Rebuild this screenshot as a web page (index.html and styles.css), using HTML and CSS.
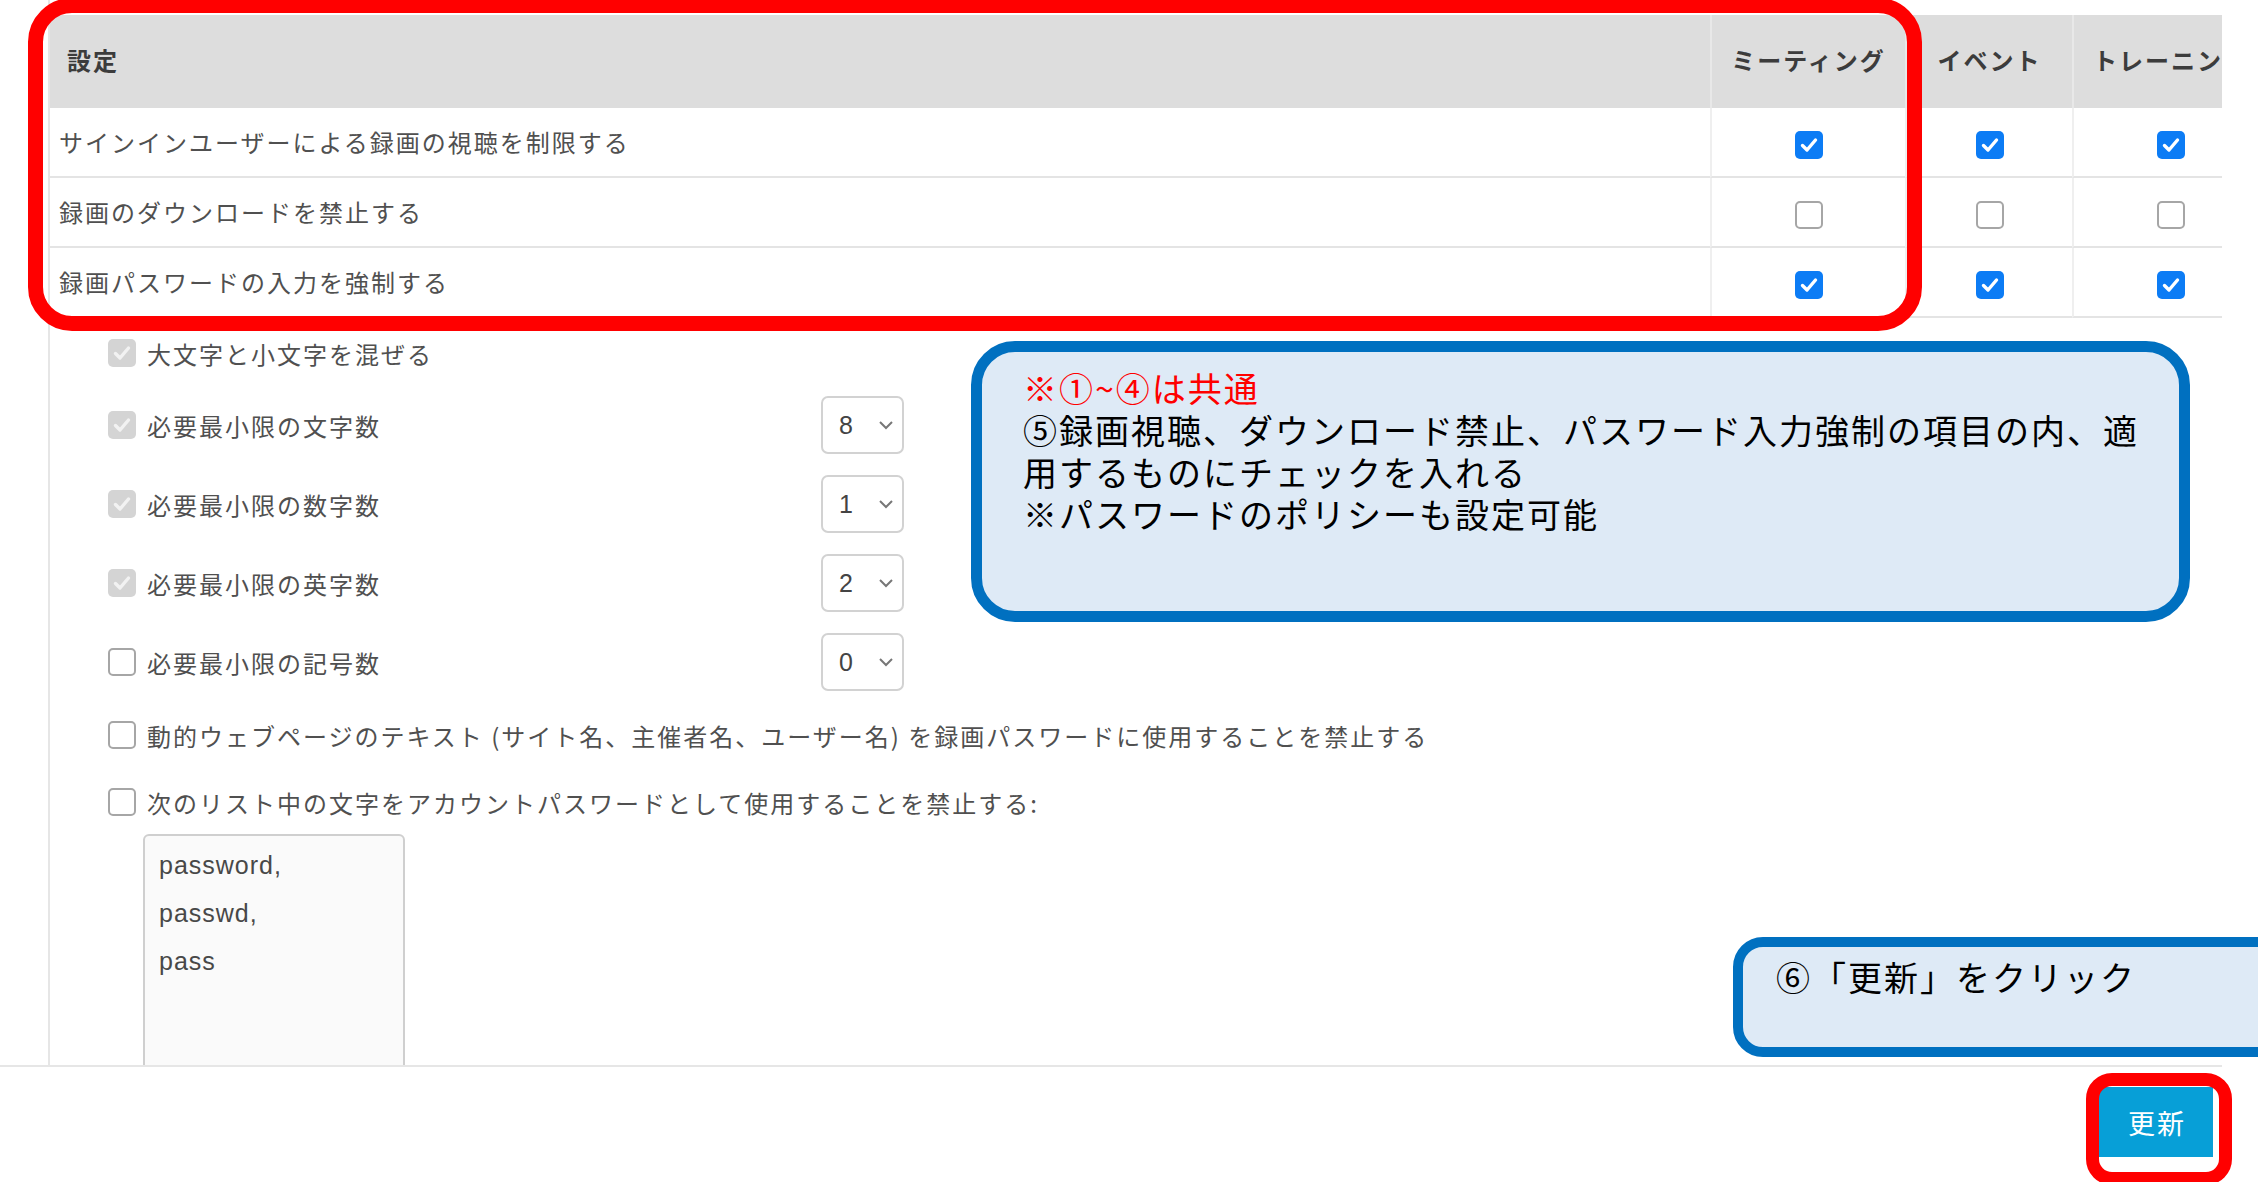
FILE: index.html
```html
<!DOCTYPE html>
<html lang="ja">
<head>
<meta charset="UTF-8">
<meta name="viewport" content="width=device-width, initial-scale=1.0">
<title>録画の設定</title>
<link rel="stylesheet" href="styles.css">
</head>
<body>
<div class="page">
    <div class="panel">
        <!-- recording settings table -->
        <div class="grid">
            <div class="th th-label">設定</div>
            <div class="th">ミーティング</div>
            <div class="th">イベント</div>
            <div class="th">トレーニング</div>

            <div class="td td-label">サインインユーザーによる録画の視聴を制限する</div>
            <div class="td"><span class="cb on"><svg viewBox="0 0 28 28"><path d="M7.5 14.5l4.5 4.5 8.5-10"/></svg></span></div>
            <div class="td"><span class="cb on"><svg viewBox="0 0 28 28"><path d="M7.5 14.5l4.5 4.5 8.5-10"/></svg></span></div>
            <div class="td"><span class="cb on"><svg viewBox="0 0 28 28"><path d="M7.5 14.5l4.5 4.5 8.5-10"/></svg></span></div>

            <div class="td td-label">録画のダウンロードを禁止する</div>
            <div class="td"><span class="cb"></span></div>
            <div class="td"><span class="cb"></span></div>
            <div class="td"><span class="cb"></span></div>

            <div class="td td-label">録画パスワードの入力を強制する</div>
            <div class="td"><span class="cb on"><svg viewBox="0 0 28 28"><path d="M7.5 14.5l4.5 4.5 8.5-10"/></svg></span></div>
            <div class="td"><span class="cb on"><svg viewBox="0 0 28 28"><path d="M7.5 14.5l4.5 4.5 8.5-10"/></svg></span></div>
            <div class="td"><span class="cb on"><svg viewBox="0 0 28 28"><path d="M7.5 14.5l4.5 4.5 8.5-10"/></svg></span></div>
        </div>

        <!-- password policy -->
        <div class="opts">
            <div class="opt">
                <span class="cb dis"><svg viewBox="0 0 28 28"><path d="M7.5 14.5l4.5 4.5 8.5-10"/></svg></span>
                <span class="txt">大文字と小文字を混ぜる</span>
            </div>
            <div class="opt has-sel">
                <span class="cb dis"><svg viewBox="0 0 28 28"><path d="M7.5 14.5l4.5 4.5 8.5-10"/></svg></span>
                <span class="txt">必要最小限の文字数</span>
                <div class="sel"><span>8</span><svg viewBox="0 0 16 10"><path d="M2 2l6 6 6-6"/></svg></div>
            </div>
            <div class="opt has-sel">
                <span class="cb dis"><svg viewBox="0 0 28 28"><path d="M7.5 14.5l4.5 4.5 8.5-10"/></svg></span>
                <span class="txt">必要最小限の数字数</span>
                <div class="sel"><span>1</span><svg viewBox="0 0 16 10"><path d="M2 2l6 6 6-6"/></svg></div>
            </div>
            <div class="opt has-sel">
                <span class="cb dis"><svg viewBox="0 0 28 28"><path d="M7.5 14.5l4.5 4.5 8.5-10"/></svg></span>
                <span class="txt">必要最小限の英字数</span>
                <div class="sel"><span>2</span><svg viewBox="0 0 16 10"><path d="M2 2l6 6 6-6"/></svg></div>
            </div>
            <div class="opt has-sel">
                <span class="cb"></span>
                <span class="txt">必要最小限の記号数</span>
                <div class="sel"><span>0</span><svg viewBox="0 0 16 10"><path d="M2 2l6 6 6-6"/></svg></div>
            </div>
            <div class="opt tall">
                <span class="cb"></span>
                <span class="txt">動的ウェブページのテキスト (サイト名、主催者名、ユーザー名) を録画パスワードに使用することを禁止する</span>
            </div>
            <div class="opt tall">
                <span class="cb"></span>
                <span class="txt">次のリスト中の文字をアカウントパスワードとして使用することを禁止する:</span>
            </div>
            <div class="wordlist">
                <div>password,</div>
                <div>passwd,</div>
                <div>pass</div>
            </div>
        </div>
    </div>

    <div class="footer">
        <button class="update-btn">更新</button>
    </div>

    <!-- annotations -->
    <div class="mark mark-table"></div>
    <div class="note note-main">
        <p class="red">※①~④は共通</p>
        <p>⑤録画視聴、ダウンロード禁止、パスワード入力強制の項目の内、適<br>用するものにチェックを入れる</p>
        <p>※パスワードのポリシーも設定可能</p>
    </div>
    <div class="note note-update">
        <p>⑥「更新」をクリック</p>
    </div>
    <div class="mark mark-btn"></div>
</div>
</body>
</html>
```

FILE: styles.css
```css
body {
    margin: 0;
    background: #fff;
    font-family: "Noto Sans CJK JP", "Liberation Sans", sans-serif;
    color: #505050;
}
.page {
    position: relative;
    width: 2258px;
    height: 1182px;
    overflow: hidden;
}
.panel {
    box-sizing: border-box;
    width: 2174px;
    height: 1065px;
    margin-left: 48px;
    padding-top: 15px;
    border-left: 2px solid #e6e6e6;
    overflow: hidden;
}
.grid {
    display: grid;
    grid-template-columns: 1660px 195px 167px 196px;
    grid-template-rows: 93px 70px 70px 70px;
}
.th {
    box-sizing: border-box;
    background: #dddddd;
    display: flex;
    align-items: center;
    justify-content: center;
    padding-bottom: 5px;
    font-size: 24px;
    letter-spacing: 2px;
    font-weight: bold;
    color: #3c3c3c;
    border-left: 2px solid #e8e8e8;
}
.th-label {
    justify-content: flex-start;
    padding-left: 17px;
    border-left: none;
}
.td {
    box-sizing: border-box;
    display: flex;
    align-items: center;
    justify-content: center;
    padding-top: 5px;
    border-bottom: 2px solid #e4e4e4;
    border-left: 2px solid #efefef;
}
.td-label {
    justify-content: flex-start;
    padding: 0 0 2px 9px;
    border-left: none;
    font-size: 24px;
    letter-spacing: 2px;
}
.cb {
    box-sizing: border-box;
    width: 28px;
    height: 28px;
    flex: none;
    border: 2px solid #a6a6a6;
    border-radius: 5px;
    background: #fff;
    display: flex;
}
.cb svg {
    width: 100%;
    height: 100%;
    fill: none;
    stroke: #fff;
    stroke-width: 3.4;
    stroke-linecap: round;
    stroke-linejoin: round;
}
.cb.on {
    background: #0c7cf5;
    border: none;
}
.cb.dis {
    background: #d4d4d4;
    border: none;
}
.cb.dis svg {
    stroke: #f2f2f2;
}
.opts {
    padding: 13px 0 0 58px;
}
.opt {
    display: flex;
    align-items: center;
    height: 44px;
    font-size: 24px;
    letter-spacing: 2px;
}
.opt .txt {
    margin-left: 11px;
    white-space: nowrap;
}
.opt.has-sel {
    height: 58px;
    margin-top: 21px;
}
.opt.has-sel .txt {
    width: 674px;
}
.opt.tall {
    height: 46px;
    margin-top: 21px;
}
.sel {
    box-sizing: border-box;
    width: 83px;
    height: 58px;
    border: 2px solid #d2d2d2;
    border-radius: 7px;
    display: flex;
    align-items: center;
    justify-content: space-between;
    padding: 0 8px 0 16px;
    font-family: "Liberation Sans", Arial, sans-serif;
    font-size: 25px;
    letter-spacing: 0;
    color: #444;
}
.sel svg {
    width: 16px;
    height: 10px;
    fill: none;
    stroke: #777;
    stroke-width: 2;
}
.wordlist {
    box-sizing: border-box;
    width: 262px;
    height: 260px;
    margin: 9px 0 0 35px;
    padding: 5px 14px;
    border: 2px solid #cfcfcf;
    border-radius: 6px;
    background: #fafafa;
    font-family: "Liberation Sans", Arial, sans-serif;
    font-size: 25px;
    letter-spacing: 1px;
    line-height: 48px;
    color: #484848;
}
.footer {
    box-sizing: border-box;
    width: 2222px;
    height: 117px;
    border-top: 2px solid #e6e6e6;
    display: flex;
    justify-content: flex-end;
    padding: 20px 9px 0 0;
}
.update-btn {
    width: 114px;
    height: 70px;
    border: none;
    background: #079fd7;
    color: #fff;
    font-family: "Noto Sans CJK JP", sans-serif;
    font-size: 27px;
    letter-spacing: 2px;
    padding: 0 0 0 2px;
}

/* annotation overlays */
.mark {
    position: absolute;
    box-sizing: border-box;
    border: 15px solid #ff0000;
}
.mark-table {
    left: 28px;
    top: -2px;
    width: 1894px;
    height: 333px;
    border-radius: 44px;
}
.mark-btn {
    left: 2086px;
    top: 1073px;
    width: 146px;
    height: 112px;
    border-width: 13px;
    border-radius: 26px;
}
.note {
    position: absolute;
    box-sizing: border-box;
    border: 11px solid #0070c0;
    background: #deeaf6;
    color: #000;
    font-size: 34px;
    letter-spacing: 2px;
    line-height: 42px;
}
.note p {
    margin: 0;
    white-space: nowrap;
}
.note .red {
    color: #ff0000;
}
.note-main {
    left: 971px;
    top: 341px;
    width: 1219px;
    height: 281px;
    border-radius: 44px;
    padding: 15px 0 0 41px;
}
.note-update {
    left: 1733px;
    top: 937px;
    width: 560px;
    height: 120px;
    border-width: 10px;
    border-radius: 30px;
    padding: 9px 0 0 33px;
}
```
